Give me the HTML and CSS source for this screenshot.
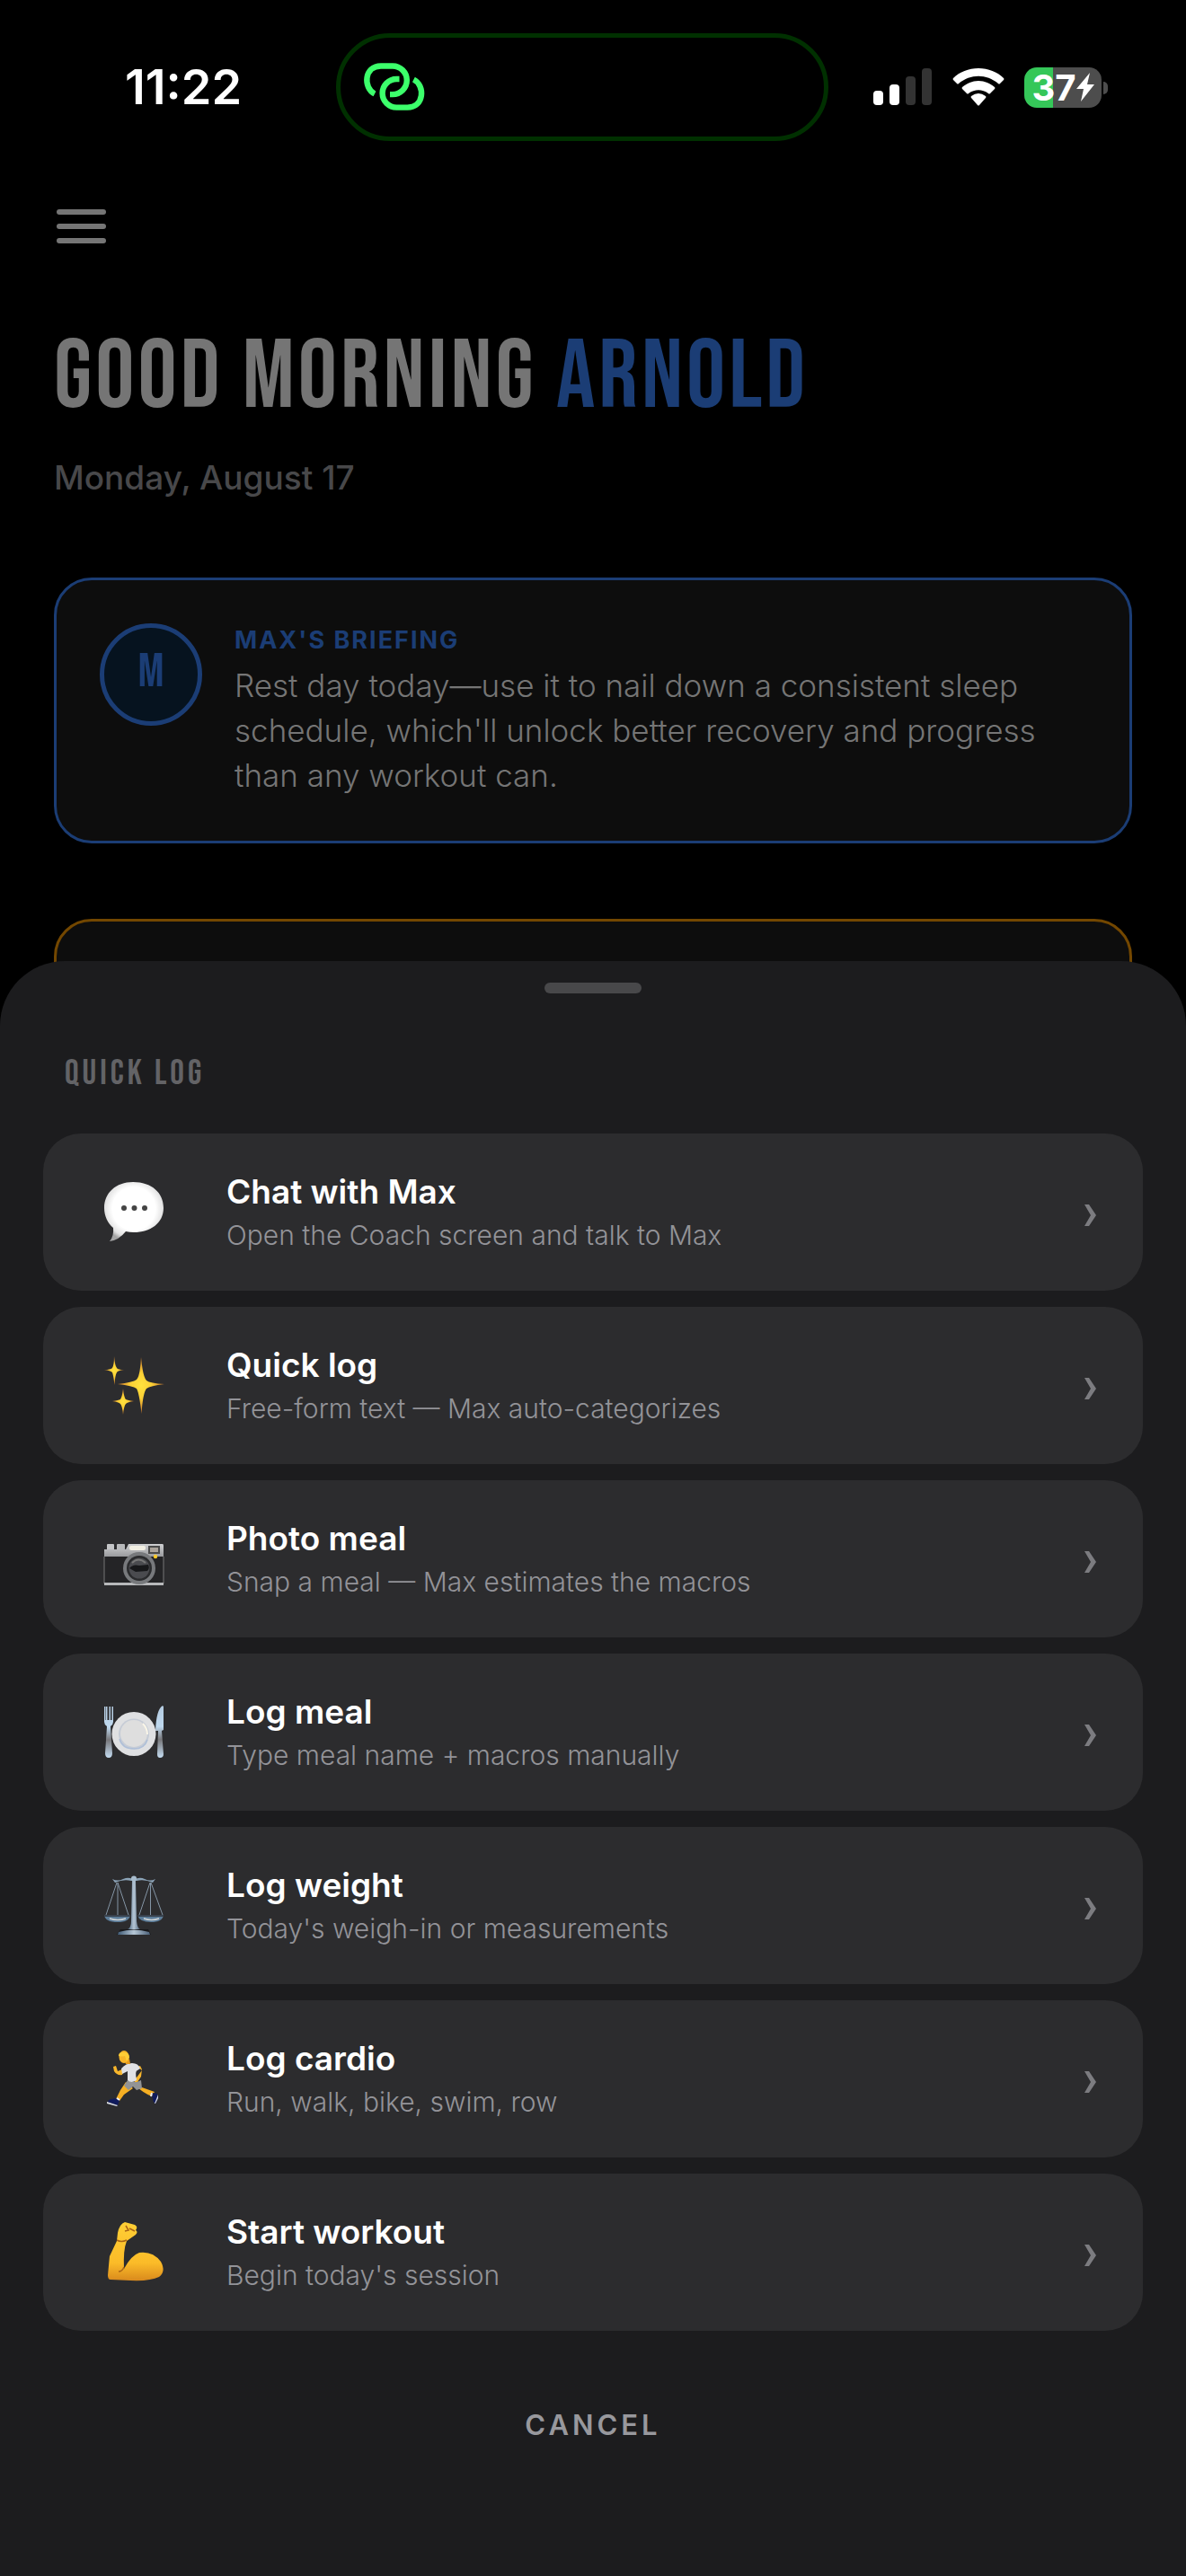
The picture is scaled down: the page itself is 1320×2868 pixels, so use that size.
FILE: index.html
```html
<!DOCTYPE html>
<html lang="en">
<head>
<meta charset="utf-8">
<meta name="viewport" content="width=device-width, initial-scale=1">
<title>Good morning Arnold</title>
<link rel="stylesheet" href="styles.css">
</head>
<body>
<header class="status">
  <time class="clock">11:22</time>
  <div class="island">
    <svg class="link-icon" viewBox="0 0 90 70" aria-hidden="true">
      <g fill="none" stroke="#3cff6b" stroke-width="6.4">
        <path d="M22 42.500C9 36 10 11.500 29 11.500H42A15.800 15.800 0 0 1 42 43.100H39"/>
        <path d="M65.400 26.500C78.400 33 77.400 57.600 58.400 57.600H46.400A15.800 15.800 0 0 1 46.400 26H49.500"/>
      </g>
    </svg>
  </div>
  <div class="indicators">
    <svg class="signal" viewBox="0 0 66 42" aria-hidden="true">
      <rect x="0" y="25" width="11" height="16" rx="4" fill="#fff"/>
      <rect x="18" y="18" width="11" height="23" rx="4" fill="#fff"/>
      <rect x="36" y="9" width="11" height="32" rx="4" fill="#333"/>
      <rect x="54" y="0" width="11" height="41" rx="4" fill="#333"/>
    </svg>
    <svg class="wifi" viewBox="0 0 58 42" aria-hidden="true">
      <g fill="#fff">
        <path d="M29 0C40 0 50 4 57 11Q58 12 57 13L53 17Q52 18 51 17C38 6 20 6 7 17Q6 18 5 17L1 13Q0 12 1 11C8 4 18 0 29 0Z"/>
        <path d="M29 14C36 14 42 17 47 21Q48 22 47 23L42 28Q41 29 40 28C33 23 25 23 18 28Q17 29 16 28L11 23Q10 22 11 21C16 17 22 14 29 14Z"/>
        <path d="M29 28Q33 28 37 31Q38 32 37 33L30 41Q29 42 28 41L21 33Q20 32 21 31Q25 28 29 28Z"/>
      </g>
    </svg>
    <div class="battery">
      <span class="level">37</span>
      <svg class="bolt" viewBox="0 0 20 32" aria-hidden="true"><path d="M15 0L0 18H8L5 32L20 13H12Z" fill="#fff"/></svg>
    </div>
  </div>
</header>

<main class="home">
  <button class="menu" type="button" aria-label="Menu"><span></span><span></span><span></span></button>
  <h1 class="greeting">GOOD MORNING <span>ARNOLD</span></h1>
  <p class="date">Monday, August 17</p>
  <section class="card briefing">
    <div class="avatar">M</div>
    <div class="briefing-text">
      <h2>MAX'S BRIEFING</h2>
      <p>Rest day today—use it to nail down a consistent sleep schedule, which'll unlock better recovery and progress than any workout can.</p>
    </div>
  </section>
  <section class="card alert"></section>
</main>

<section class="sheet" role="dialog" aria-labelledby="sheet-title">
  <div class="handle"></div>
  <h2 class="sheet-title" id="sheet-title">QUICK LOG</h2>
  <div class="actions">
    <button class="action" type="button">
      <svg class="icon" viewBox="0 0 120 120" aria-hidden="true">
        <defs><radialGradient id="bubble" cx=".5" cy=".45" r=".56"><stop offset=".65" stop-color="#fff"/><stop offset=".88" stop-color="#e2e2e2"/><stop offset="1" stop-color="#a4a4a4"/></radialGradient></defs>
        <path d="M58 26C79 26 92 38 92 55C92 72 77 82 59 82Q54 82 50 81Q42 91 32 92Q37 86 36 77C30 72 26 64 26 55C26 38 39 26 58 26Z" fill="url(#bubble)"/>
        <g fill="#444"><circle cx="48" cy="55" r="3"/><circle cx="59.500" cy="55" r="3"/><circle cx="71" cy="55" r="3"/></g>
      </svg>
      <span class="copy"><span class="name">Chat with Max</span><span class="hint">Open the Coach screen and talk to Max</span></span>
      <svg class="chevron" viewBox="0 0 16 34" aria-hidden="true"><path d="M2 8H7L15 20L7 32H2L9 20Z"/></svg>
    </button>
    <button class="action" type="button">
      <svg class="icon" viewBox="0 3 120 120" aria-hidden="true">
        <defs><radialGradient id="spark"><stop offset="0" stop-color="#ffe23e"/><stop offset=".45" stop-color="#fbcf35"/><stop offset="1" stop-color="#c9762c"/></radialGradient></defs>
        <g fill="url(#spark)">
          <path d="M67 31Q69 53 73 57Q77 60 93 61Q77 63 73 66Q69 71 67.500 94Q65 71 62 66Q58 63 41 61Q58 59 62 56Q66 52 67 31Z"/>
          <path d="M37 30Q38 41 40 43Q41 45 48 45Q41 46 40 48Q38 51 37.500 62Q36 50 35 48Q33 46 26 45Q33 45 35 43Q37 40 37 30Z"/>
          <path d="M47 66Q48 76 50 78Q52 79 59 80Q52 81 50 83Q48 85 47 95Q46 85 44 83Q42 81 35 80Q42 79 44 78Q46 75 47 66Z"/>
        </g>
      </svg>
      <span class="copy"><span class="name">Quick log</span><span class="hint">Free-form text — Max auto-categorizes</span></span>
      <svg class="chevron" viewBox="0 0 16 34" aria-hidden="true"><path d="M2 8H7L15 20L7 32H2L9 20Z"/></svg>
    </button>
    <button class="action" type="button">
      <svg class="icon" viewBox="0 0 120 120" aria-hidden="true">
        <defs><linearGradient id="chrome" x2="0" y2="1"><stop offset="0" stop-color="#cfd0d2"/><stop offset="1" stop-color="#96979a"/></linearGradient></defs>
        <rect x="29" y="43" width="8" height="8" rx="1" fill="#c4c5c7"/><rect x="40" y="43" width="9" height="8" rx="1" fill="#b8b9bb"/>
        <path d="M26 49H50L53 43H91Q92 43 92 45V58H26Z" fill="url(#chrome)"/>
        <rect x="26" y="57" width="66" height="30" fill="#242426"/><path d="M26 57V87M92 57V87" stroke="#777" stroke-width="1"/>
        <rect x="26" y="86" width="66" height="3" fill="#b7b8ba"/>
        <rect x="54" y="45" width="18" height="5" rx="2" fill="#f2efe3"/>
        <rect x="75" y="45" width="13" height="9" fill="#4a4a4a"/><rect x="77" y="47" width="9" height="5" fill="#aaa39b"/>
        <circle cx="65" cy="70" r="18" fill="#77797c"/><circle cx="65" cy="70" r="14" fill="#2a2b2d"/><circle cx="65" cy="70" r="11.500" fill="#4a4b4f"/>
        <path d="M54 70Q58 65 65 67L75 66Q77 70 74 73L61 74Z" fill="#17181a"/><path d="M57 64Q64 57 72 64" stroke="#777" stroke-width="2" fill="none"/>
        <circle cx="83" cy="57" r="2.200" fill="#ffc928"/>
      </svg>
      <span class="copy"><span class="name">Photo meal</span><span class="hint">Snap a meal — Max estimates the macros</span></span>
      <svg class="chevron" viewBox="0 0 16 34" aria-hidden="true"><path d="M2 8H7L15 20L7 32H2L9 20Z"/></svg>
    </button>
    <button class="action" type="button">
      <svg class="icon" viewBox="0 3 120 120" aria-hidden="true">
        <defs><linearGradient id="steel" x2="0" y2="1"><stop offset="0" stop-color="#b4cbe0"/><stop offset=".4" stop-color="#bed8ee"/><stop offset=".65" stop-color="#77777a"/><stop offset="1" stop-color="#c4dcf1"/></linearGradient></defs>
        <path d="M26 34V51Q26 54 29 56L27 86Q27 91 31 91Q35 91 35 86L33 56Q36 54 36 51V34H34.500V49H33V34H31.500V49H29.500V34H28V49H27.500L27.500 34Z" fill="url(#steel)"/>
        <path d="M91 33Q84 37 83 61H86L85 87Q85 91 88 91Q92 91 92 87L90 61L92 60V34Z" fill="url(#steel)"/>
        <circle cx="59" cy="64.500" r="24.500" fill="#dfe0e2"/><circle cx="59" cy="64.500" r="17" fill="#c6ccd6"/><circle cx="59" cy="64" r="15" fill="#dedede"/>
        <path d="M43 70Q46 81 59 81Q71 81 74 71" stroke="#aebfd8" stroke-width="1.500" fill="none"/><path d="M69 53Q74 58 74 65" stroke="#faf6e8" stroke-width="2" fill="none"/>
      </svg>
      <span class="copy"><span class="name">Log meal</span><span class="hint">Type meal name + macros manually</span></span>
      <svg class="chevron" viewBox="0 0 16 34" aria-hidden="true"><path d="M2 8H7L15 20L7 32H2L9 20Z"/></svg>
    </button>
    <button class="action" type="button">
      <svg class="icon" viewBox="0 2 120 120" aria-hidden="true">
        <defs><linearGradient id="metal"><stop offset="0" stop-color="#3f5a75"/><stop offset=".5" stop-color="#b6c7d6"/><stop offset="1" stop-color="#4a6078"/></linearGradient></defs>
        <path d="M40 36L28 72M41 36V72M41 36L53 72M77 36L65 72M77.500 36V72M78 36L91 72" stroke="#8394a4" stroke-width="1" fill="none"/>
        <path d="M35 32Q41 35 47 32Q54 29 59 33Q65 29 71 32Q77 35 83 32L80 36Q71 32 62 34H56Q47 32 38 36Z" fill="#8ca4b8"/>
        <circle cx="59" cy="31.500" r="3" fill="#a8bccd"/>
        <path d="M57 34H61L62 79Q63 87 66 88H52Q56 86 56 79Z" fill="url(#metal)"/>
        <path d="M26 72H55Q54 80 41 80Q27 80 26 72ZM63 72H92Q91 80 78 80Q65 80 63 72Z" fill="#5d7d99"/>
        <path d="M26 72H55V74H26ZM63 72H92V74H63Z" fill="#39424d"/>
        <path d="M32 76Q41 79 50 76M70 76Q79 79 87 76" stroke="#d0d5d8" stroke-width="1.500" fill="none"/>
        <path d="M44 88H75L78 94H40Z" fill="#17181b"/><path d="M42 91Q59 86 76 91L77 94H41Z" fill="url(#metal)"/>
      </svg>
      <span class="copy"><span class="name">Log weight</span><span class="hint">Today's weigh-in or measurements</span></span>
      <svg class="chevron" viewBox="0 0 16 34" aria-hidden="true"><path d="M2 8H7L15 20L7 32H2L9 20Z"/></svg>
    </button>
    <button class="action" type="button">
      <svg class="icon" viewBox="0 0 120 120" aria-hidden="true">
        <path d="M50 63L44 72L39 82L43 84L48 77L58 70ZM62 68Q69 75 79 79L82 74L68 69Z" fill="#f5af23"/>
        <path d="M39 81L43 83L41 89L30 85Q30 82 39 81ZM79 75L85 76Q87 82 83 87Q80 87 79 75Z" fill="#101b5c"/>
        <path d="M29 85L41 89L40 90L29 87ZM86 77L82 87H83L86 81Z" fill="#d9dce5"/><path d="M40 81L43 83M79 75L78 79" stroke="#eee" stroke-width="2"/>
        <path d="M52 61Q60 65 67 61L68 70L62 72L58 68L53 72L48 67Z" fill="#929394"/>
        <path d="M48 48L41 51L39 45L36 46L37 51Q40 56 46 55ZM63 46L68 50L62 58L59 59L60 63L63 63L67 57L68 49L66 45Z" fill="#f8b62b"/>
        <path d="M45 48Q50 42 57 42Q64 42 66 48L63 50Q60 50 62 61Q56 65 52 61L52 51L46 54Z" fill="#e0e1e4"/>
        <path d="M49 40L50 43L55 43L54 37Z" fill="#e79c1c"/><ellipse cx="48" cy="35" rx="5.500" ry="7" fill="#f8b528"/>
        <path d="M42 34Q42 30 46 30Q54 29 54 36L51 40L49 34Q45 35 42 34Z" fill="#ffcd35"/>
      </svg>
      <span class="copy"><span class="name">Log cardio</span><span class="hint">Run, walk, bike, swim, row</span></span>
      <svg class="chevron" viewBox="0 0 16 34" aria-hidden="true"><path d="M2 8H7L15 20L7 32H2L9 20Z"/></svg>
    </button>
    <button class="action" type="button">
      <svg class="icon" viewBox="0 3 120 120" aria-hidden="true">
        <defs><linearGradient id="skin" x2="0" y2="1"><stop offset="0" stop-color="#ffcf35"/><stop offset=".7" stop-color="#fbbb28"/><stop offset="1" stop-color="#d98a1d"/></linearGradient></defs>
        <path d="M41 41Q43 31 49 29L60 32Q64 34 61 38Q64 40 61 43L51 50Q47 60 48 81Q56 66 65 63Q80 61 89 73Q95 84 87 90Q77 95 55 94L33 93Q30 93 30 88L32 67L40 50Z" fill="url(#skin)"/>
        <path d="M50 33L53 38L49 39M54 36L60 39M40 49Q45 52 51 49M48 79Q46 84 42 84" stroke="#a96415" stroke-width="1.500" fill="none"/>
      </svg>
      <span class="copy"><span class="name">Start workout</span><span class="hint">Begin today's session</span></span>
      <svg class="chevron" viewBox="0 0 16 34" aria-hidden="true"><path d="M2 8H7L15 20L7 32H2L9 20Z"/></svg>
    </button>
  </div>
  <button class="cancel" type="button">CANCEL</button>
</section>
</body>
</html>
```
FILE: styles.css
```css
* { box-sizing: border-box; }

body {
  margin: 0;
  min-height: 100vh;
  display: flex;
  flex-direction: column;
  background: #000;
  color: #fff;
  font-family: Inter, "Liberation Sans", sans-serif;
}

button {
  border: 0;
  padding: 0;
  background: none;
  color: inherit;
  font: inherit;
  text-align: left;
}

h1, h2, p { margin: 0; }

.status {
  display: grid;
  grid-template-columns: 1fr 548px 1fr;
  align-items: center;
  padding: 37px 24px 0 0;
}

.clock {
  padding-left: 34px;
  text-align: center;
  font-size: 54px;
  line-height: 64px;
  font-weight: 600;
}

.island {
  height: 120px;
  border: 5px solid #003000;
  border-radius: 60px;
  display: flex;
  align-items: center;
  padding-left: 16px;
}

.link-icon { width: 90px; height: 70px; }

.indicators {
  display: flex;
  align-items: center;
  gap: 22px;
  padding-left: 50px;
}

.signal { width: 66px; height: 42px; }
.wifi { width: 58px; height: 42px; }

.battery {
  position: relative;
  width: 86px;
  height: 45px;
  border-radius: 14px;
  background: linear-gradient(90deg, #35c759 37%, #4d4d4d 37%);
  display: flex;
  align-items: center;
  justify-content: center;
}

.battery::after {
  content: "";
  position: absolute;
  left: 88px;
  top: 16px;
  width: 5px;
  height: 14px;
  border-radius: 0 5px 5px 0;
  background: #4d4d4d;
}

.level { font-size: 40px; line-height: 45px; font-weight: 700; }
.bolt { width: 20px; height: 32px; }

.home { padding: 76px 60px 0; }

.menu {
  display: flex;
  flex-direction: column;
  gap: 10px;
  padding: 0 3px;
}

.menu span {
  width: 55px;
  height: 6px;
  border-radius: 3px;
  background: #757575;
}

.greeting, .avatar, .sheet-title {
  font-family: "Bebas Neue", "Liberation Sans Narrow", "Liberation Sans", sans-serif;
  font-weight: 400;
}

.greeting {
  margin-top: 98px;
  color: #757575;
  font-size: 108px;
  line-height: 104px;
  letter-spacing: 4px;
  white-space: nowrap;
}

.greeting span { color: #1b3d75; }

.date {
  margin-top: 35px;
  color: #48484a;
  font-size: 37px;
  line-height: 48px;
  font-weight: 450;
}

.card {
  border: 3px solid #1b3d75;
  border-radius: 42px;
  background: #0d0d0d;
}

.briefing {
  margin-top: 87px;
  display: flex;
  gap: 36px;
  padding: 48px;
}

.avatar {
  flex: none;
  width: 114px;
  height: 114px;
  border: 5px solid #1b3d75;
  border-radius: 50%;
  padding-bottom: 8px;
  background: #06131f;
  color: #1b3d75;
  display: flex;
  align-items: center;
  justify-content: center;
  font-size: 54px;
}

.briefing-text h2 {
  color: #1b3d75;
  font-size: 27px;
  line-height: 38px;
  font-weight: 700;
  letter-spacing: 2px;
}

.briefing-text p {
  margin-top: 6px;
  color: #757575;
  font-size: 35px;
  line-height: 50px;
  font-weight: 350;
}

.alert {
  height: 120px;
  margin-top: 84px;
  border-color: #734700;
}

.sheet {
  position: relative;
  flex: 1;
  margin-top: -73px;
  padding: 24px 48px 0;
  border-radius: 72px 72px 0 0;
  background: #1c1c1e;
  display: flex;
  flex-direction: column;
}

.handle {
  width: 108px;
  height: 12px;
  border-radius: 6px;
  background: #48484a;
  align-self: center;
}

.sheet-title {
  margin-top: 68px;
  padding-left: 24px;
  color: #636366;
  font-size: 39px;
  line-height: 44px;
  letter-spacing: 4px;
}

.actions {
  margin-top: 44px;
  display: flex;
  flex-direction: column;
  gap: 18px;
}

.action {
  height: 175px;
  border-radius: 42px;
  background: #2c2c2e;
  display: flex;
  align-items: center;
  padding: 0 51px 0 42px;
}

.icon { width: 120px; height: 120px; }

.copy {
  flex: 1;
  padding-left: 42px;
  display: flex;
  flex-direction: column;
  gap: 4px;
}

.name { font-size: 37px; line-height: 46px; font-weight: 600; }
.hint { font-size: 30px; line-height: 42px; font-weight: 350; color: #939398; }
.chevron { width: 16px; height: 34px; fill: #7c7c80; }

.cancel {
  align-self: center;
  margin-top: 80px;
  padding: 0 24px;
  color: #98989d;
  font-size: 31px;
  line-height: 50px;
  font-weight: 600;
  letter-spacing: 4px;
}
```
